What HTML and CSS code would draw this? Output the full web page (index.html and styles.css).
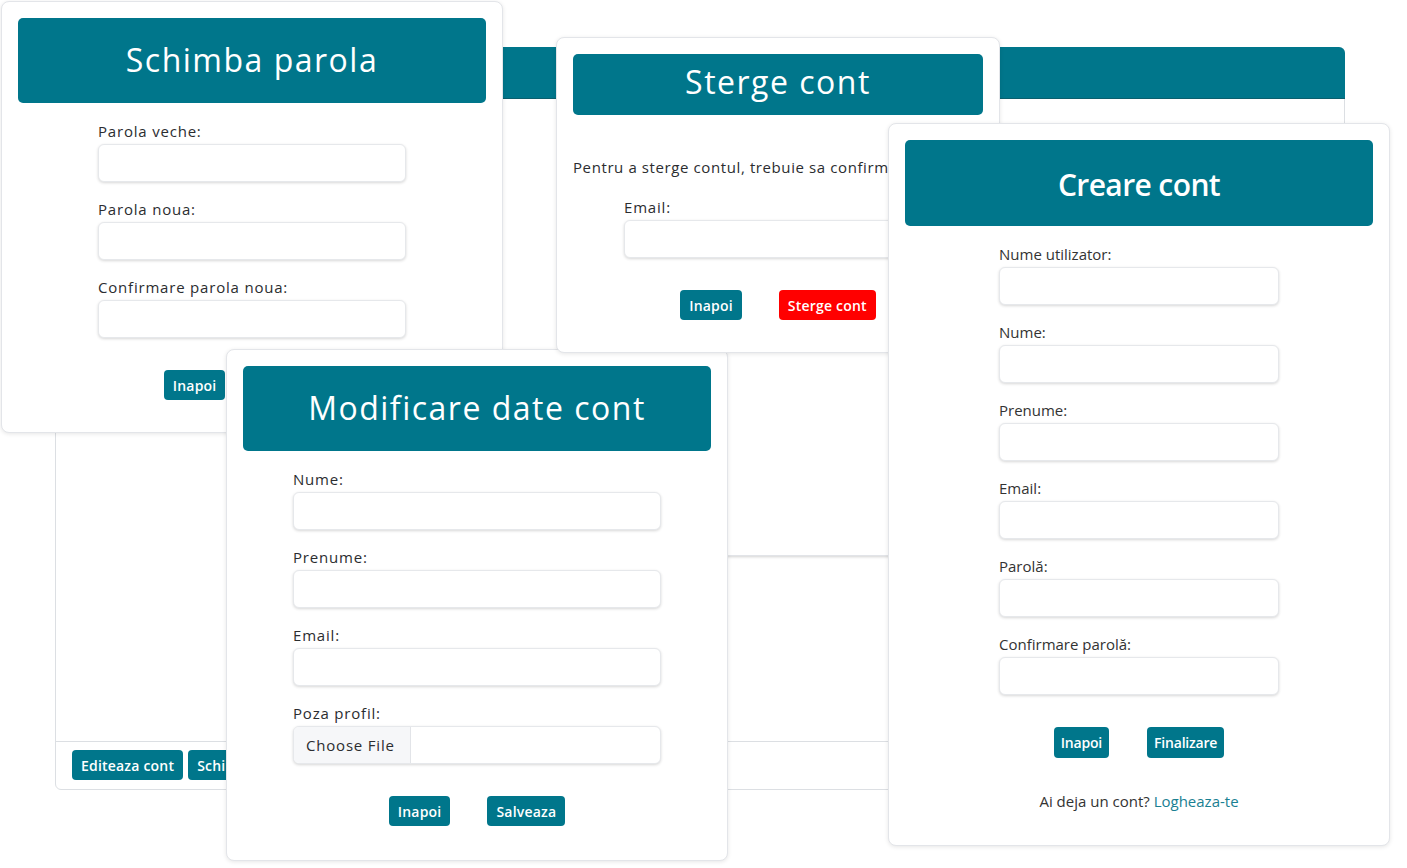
FILE: index.html
```html
<!DOCTYPE html>
<html lang="ro">
<head>
<meta charset="utf-8">
<title>Cont</title>
<link rel="stylesheet" href="styles.css">
</head>
<body>
<div class="desktop">

  <div class="panel">
    <div class="panel-head"></div>
    <div class="panel-body"></div>
    <div class="panel-foot">
      <button class="btn p">Editeaza cont</button>
      <button class="btn p">Schimba parola</button>
    </div>
  </div>

  <div class="ghost"></div>

  <div class="win w-schimba">
    <div class="win-head p-title">Schimba parola</div>
    <div class="form f308">
      <div class="field p"><label>Parola veche:</label><input type="password"></div>
      <div class="field p"><label>Parola noua:</label><input type="password"></div>
      <div class="field p"><label>Confirmare parola noua:</label><input type="password"></div>
    </div>
    <div class="actions">
      <button class="btn p">Inapoi</button>
      <button class="btn p">Salveaza</button>
    </div>
  </div>

  <div class="win w-modif">
    <div class="win-head p-title">Modificare date cont</div>
    <div class="form f368">
      <div class="field p"><label>Nume:</label><input type="text"></div>
      <div class="field p"><label>Prenume:</label><input type="text"></div>
      <div class="field p"><label>Email:</label><input type="text"></div>
      <div class="field p"><label>Poza profil:</label>
        <div class="file"><span class="file-btn">Choose File</span><span class="file-name"></span></div>
      </div>
    </div>
    <div class="actions">
      <button class="btn p">Inapoi</button>
      <button class="btn p">Salveaza</button>
    </div>
  </div>

  <div class="win w-sterge">
    <div class="win-head head-short p-title">Sterge cont</div>
    <p class="note p">Pentru a sterge contul, trebuie sa confirmati adresa de email.</p>
    <div class="form f308 form-tight">
      <div class="field p"><label>Email:</label><input type="text"></div>
    </div>
    <div class="actions">
      <button class="btn p">Inapoi</button>
      <button class="btn p danger">Sterge cont</button>
    </div>
  </div>

  <div class="win w-creare">
    <div class="win-head s-title">Creare cont</div>
    <div class="form f280">
      <div class="field s"><label>Nume utilizator:</label><input type="text"></div>
      <div class="field s"><label>Nume:</label><input type="text"></div>
      <div class="field s"><label>Prenume:</label><input type="text"></div>
      <div class="field s"><label>Email:</label><input type="text"></div>
      <div class="field s"><label>Parolă:</label><input type="password"></div>
      <div class="field s"><label>Confirmare parolă:</label><input type="password"></div>
    </div>
    <div class="actions actions-s">
      <button class="btn s">Inapoi</button>
      <button class="btn s">Finalizare</button>
    </div>
    <p class="login s">Ai deja un cont? <a href="#">Logheaza-te</a></p>
  </div>

</div>
</body>
</html>
```

FILE: styles.css
```css
html, body {
  margin: 0;
  background: #ffffff;
}

body {
  font-family: "Open Sans", "Noto Sans", sans-serif;
  color: #212529;
}

.desktop {
  position: relative;
  width: 1407px;
  height: 868px;
  overflow: hidden;
}

/* ---------- background profile panel ---------- */
.panel {
  position: absolute;
  left: 55px;
  top: 47px;
  width: 1290px;
  height: 743px;
  box-sizing: border-box;
  border: 1px solid #dcdfe3;
  border-radius: 6px;
  background: #fff;
  display: flex;
  flex-direction: column;
  z-index: 1;
}

.panel-head {
  height: 51px;
  margin: -1px -1px 0;
  background: #00768b;
  border-radius: 6px 6px 0 0;
  border-bottom: 1px solid #0b5f6e;
}

.panel-body {
  flex: 1;
}

.panel-foot {
  height: 48px;
  box-sizing: border-box;
  border-top: 1px solid #dcdfe3;
  padding: 8px 16px;
  display: flex;
  gap: 5px;
}

.ghost {
  position: absolute;
  left: 600px;
  top: 250px;
  width: 360px;
  height: 306px;
  box-sizing: border-box;
  border: 1px solid #e2e4e8;
  border-radius: 6px;
  background: #fff;
  box-shadow: 0 1px 3px rgba(0, 0, 0, 0.18);
  z-index: 2;
}

/* ---------- windows ---------- */
.win {
  position: absolute;
  box-sizing: border-box;
  background: #fff;
  border: 1px solid #e3e5e9;
  border-radius: 8px;
  box-shadow: 0 1px 4px rgba(0, 0, 0, 0.10);
  padding: 16px 16px 32px;
  overflow: hidden;
}

.w-schimba { left: 1px;   top: 1px;   width: 502px; z-index: 3; }
.w-modif   { left: 226px; top: 349px; width: 502px; z-index: 4; padding-bottom: 34px; }
.w-sterge  { left: 556px; top: 37px;  width: 444px; z-index: 5; }
.w-creare  { left: 888px; top: 123px; width: 502px; z-index: 6; padding-bottom: 33px; }

.win-head {
  height: 85px;
  background: #00768b;
  border-radius: 5px;
  color: #fff;
  display: flex;
  align-items: center;
  justify-content: center;
  white-space: nowrap;
}

.w-creare .win-head { height: 86px; }

.p-title {
  font-family: "Open Sans", sans-serif;
  font-size: 32px;
  font-weight: 400;
  letter-spacing: 1.5px;
  padding-bottom: 2px;
  box-sizing: border-box;
}

.head-short {
  height: 61px;
  padding-bottom: 7px;
}

.s-title {
  font-family: "Open Sans", sans-serif;
  font-size: 30px;
  font-weight: 600;
  letter-spacing: -0.6px;
  padding-top: 3px;
  box-sizing: border-box;
}

/* ---------- forms ---------- */
.form {
  display: flow-root;
  margin: 17px auto 0;
}

.f308 { width: 308px; }
.f368 { width: 368px; }
.f280 { width: 280px; }

.form-tight { margin-top: 18px; }

.field label {
  display: block;
  font-size: 15px;
  line-height: 22px;
  margin-bottom: 2px;
  color: #2b2d30;
}

.field.p label {
  letter-spacing: 0.8px;
}

.field.s label {
  color: #333;
}

.field input,
.file {
  display: block;
  width: 100%;
  height: 38px;
  box-sizing: border-box;
  border: 1px solid #e6e8eb;
  border-radius: 6px;
  background: #fff;
  box-shadow: 0 1px 3px rgba(0, 0, 0, 0.16);
  margin: 0 0 16px;
  outline: none;
}

.file {
  display: flex;
  overflow: hidden;
}

.file-btn {
  width: 117px;
  box-sizing: border-box;
  background: #f6f7f9;
  border-right: 1px solid #e2e4e8;
  padding-left: 12px;
  display: flex;
  align-items: center;
  font-size: 15px;
  letter-spacing: 0.8px;
  color: #2b2d30;
}

.file-name {
  flex: 1;
}

.note {
  margin: 41px 0 0;
  font-size: 15px;
  line-height: 22px;
  letter-spacing: 0.6px;
  white-space: nowrap;
  color: #2b2d30;
}

/* ---------- buttons ---------- */
.actions {
  display: flex;
  justify-content: center;
  gap: 37px;
  margin-top: 16px;
}

.btn {
  height: 30px;
  padding: 0 9px;
  border: 0;
  border-radius: 4px;
  background: #00768b;
  color: #fff;
  font-family: "Open Sans", sans-serif;
  font-size: 14px;
  font-weight: 600;
  cursor: pointer;
  white-space: nowrap;
}

.btn.p {
  letter-spacing: 0.2px;
}

.btn.danger {
  background: #ff0000;
}

.actions-s {
  gap: 38px;
}

.btn.s {
  height: 31px;
  padding: 0 7px;
  letter-spacing: -0.2px;
}

.login {
  margin: 32px 0 0;
  text-align: center;
  font-size: 15px;
  line-height: 22px;
  color: #333;
}

.login a {
  color: #1a8092;
  text-decoration: none;
}
```
